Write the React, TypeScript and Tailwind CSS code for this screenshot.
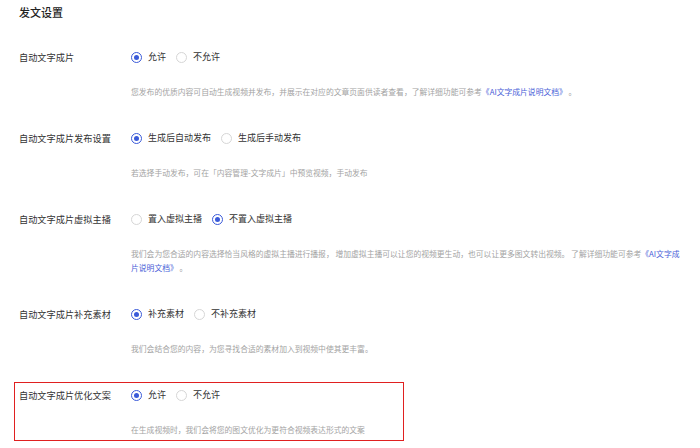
import React from "react";

type Opt = { label: string; checked: boolean };

function Radio({ checked }: { checked: boolean }) {
  return checked ? (
    <span className="flex h-[11px] w-[11px] items-center justify-center rounded-full border border-[#3a5ad9] bg-white">
      <span className="h-[5px] w-[5px] rounded-full bg-[#3a5ad9]" />
    </span>
  ) : (
    <span className="h-[11px] w-[11px] rounded-full border border-[#d6d6d6] bg-white" />
  );
}

function Options({ opts }: { opts: Opt[] }) {
  return (
    <div className="flex items-center gap-[10px]">
      {opts.map((o) => (
        <div key={o.label} className="flex items-center gap-[6px]">
          <Radio checked={o.checked} />
          <span className="text-[9px] leading-[20px] text-[#333]">{o.label}</span>
        </div>
      ))}
    </div>
  );
}

function Block({
  label,
  opts,
  children,
}: {
  label: string;
  opts: Opt[];
  children: React.ReactNode;
}) {
  return (
    <div className="flex flex-col">
      <div className="flex h-[20px] items-center">
        <div className="w-[112px] text-[9.2px] leading-[20px] text-[#333]">{label}</div>
        <Options opts={opts} />
      </div>
      <div className="ml-[112px] mt-[18px] w-[562px] text-[7.8px] leading-[14px] text-[#a3a3a3]">
        {children}
      </div>
    </div>
  );
}

const Link = ({ children }: { children: React.ReactNode }) => (
  <span className="text-[#4a61d8]">{children}</span>
);

export default function App() {
  return (
    <div
      className="h-[448px] w-[700px] overflow-hidden bg-white pl-[19px]"
      style={{ fontFamily: '"Noto Sans CJK SC", "Noto Sans", sans-serif' }}
    >
      <div className="pt-[4px] text-[11px] font-medium leading-[16px] text-[#222]">发文设置</div>
      <div className="mt-[27px] flex flex-col gap-[29px]">
        <Block
          label="自动文字成片"
          opts={[
            { label: "允许", checked: true },
            { label: "不允许", checked: false },
          ]}
        >
          您发布的优质内容可自动生成视频并发布，并展示在对应的文章页面供读者查看，了解详细功能可参考
          <Link>《AI文字成片说明文档》</Link> 。
        </Block>
        <Block
          label="自动文字成片发布设置"
          opts={[
            { label: "生成后自动发布", checked: true },
            { label: "生成后手动发布", checked: false },
          ]}
        >
          若选择手动发布，可在「内容管理-文字成片」中预览视频，手动发布
        </Block>
        <Block
          label="自动文字成片虚拟主播"
          opts={[
            { label: "置入虚拟主播", checked: false },
            { label: "不置入虚拟主播", checked: true },
          ]}
        >
          我们会为您合适的内容选择恰当风格的虚拟主播进行播报， 增加虚拟主播可以让您的视频更生动，也可以让更多图文转出视频。 了解详细功能可参考
          <Link>《AI文字成</Link>
          <br />
          <Link>片说明文档》</Link> 。
        </Block>
        <Block
          label="自动文字成片补充素材"
          opts={[
            { label: "补充素材", checked: true },
            { label: "不补充素材", checked: false },
          ]}
        >
          我们会结合您的内容，为您寻找合适的素材加入到视频中使其更丰富。
        </Block>
        <div className="-mt-[3px] ml-[-5px] w-[390px] border border-[#e02020] pb-[3px] pl-[4px] pt-[2px]">
          <Block
            label="自动文字成片优化文案"
            opts={[
              { label: "允许", checked: true },
              { label: "不允许", checked: false },
            ]}
          >
            在生成视频时，我们会将您的图文优化为更符合视频表达形式的文案
          </Block>
        </div>
      </div>
    </div>
  );
}
